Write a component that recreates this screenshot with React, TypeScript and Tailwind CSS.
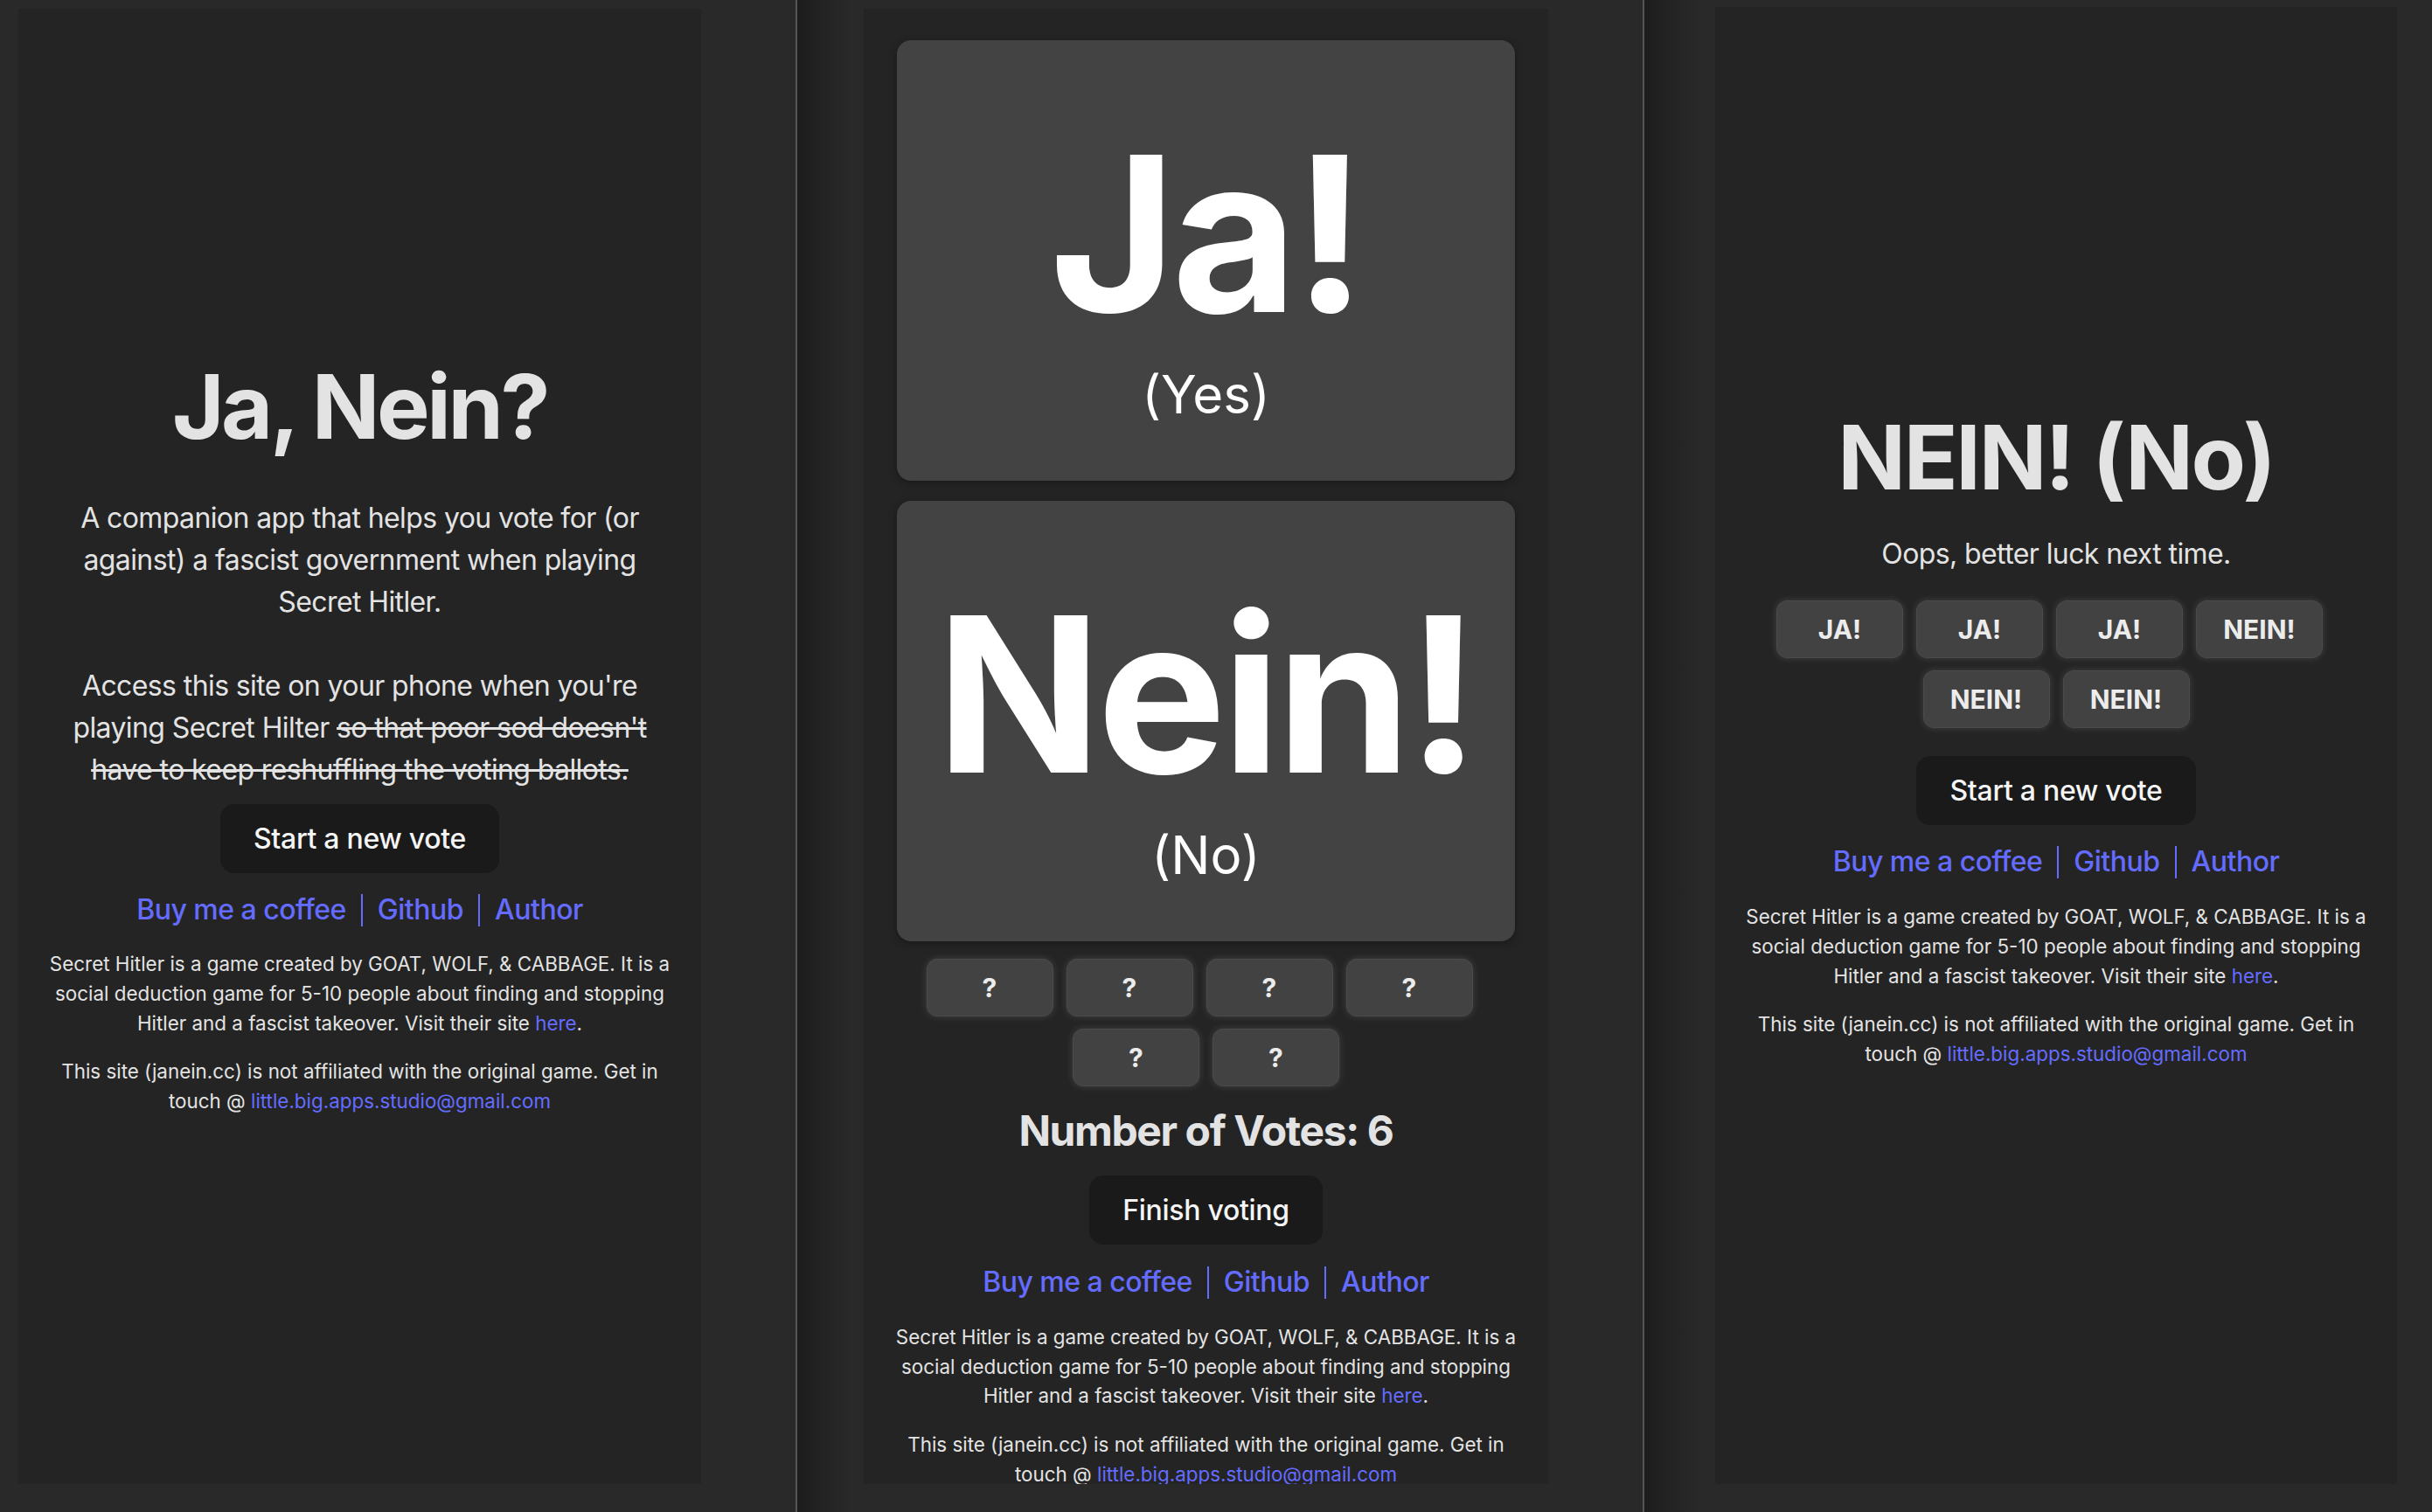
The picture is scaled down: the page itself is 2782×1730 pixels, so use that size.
const LINK = "text-[#646cff]";

function Links() {
  return (
    <div className="flex h-[48px] items-center justify-center text-[32px] font-medium tracking-[-0.5px] text-[#646cff]">
      <a>Buy me a coffee</a>
      <span className="mx-[17px] h-[37px] w-[2px] bg-[#646cff]" />
      <a>Github</a>
      <span className="mx-[17px] h-[37px] w-[2px] bg-[#646cff]" />
      <a>Author</a>
    </div>
  );
}

function Footer() {
  return (
    <div className="whitespace-nowrap text-center text-[22.4px] leading-[33.6px] text-[#e3e3e3]">
      <p>
        Secret Hitler is a game created by GOAT, WOLF, &amp; CABBAGE. It is a
        <br />
        social deduction game for 5-10 people about finding and stopping
        <br />
        Hitler and a fascist takeover. Visit their site{" "}
        <a className={LINK}>here</a>.
      </p>
      <p className="mt-[22.4px]">
        This site (janein.cc) is not affiliated with the original game. Get in
        <br />
        touch @ <a className={LINK}>little.big.apps.studio@gmail.com</a>
      </p>
    </div>
  );
}

function DarkButton({ label }: { label: string }) {
  return (
    <button
      type="button"
      className="h-[79px] rounded-[16px] bg-[#1a1a1a] px-[38px] text-[32px] font-medium tracking-[-0.3px] text-[#f5f5f5]"
    >
      {label}
    </button>
  );
}

function Tile({ label }: { label: string }) {
  return (
    <div className="flex h-[66px] w-[145px] items-center justify-center rounded-[12px] border border-[#4b4b4b] bg-[#424242] text-[30px] font-bold text-[#ececec] shadow-[0_0_8px_rgba(255,255,255,0.14)]">
      {label}
    </div>
  );
}

function Tiles({ labels }: { labels: string[] }) {
  return (
    <div className="flex flex-col items-center gap-[14px]">
      <div className="mr-[15px] flex gap-[15px]">
        {labels.slice(0, 4).map((l, i) => (
          <Tile key={i} label={l} />
        ))}
      </div>
      <div className="flex gap-[15px]">
        {labels.slice(4).map((l, i) => (
          <Tile key={i} label={l} />
        ))}
      </div>
    </div>
  );
}

function BigCard({ word, sub }: { word: string; sub: string }) {
  return (
    <div className="flex h-[504px] w-[707px] shrink-0 flex-col items-center rounded-[16px] bg-[#434343] pt-[97px] text-white shadow-[0_2px_10px_rgba(0,0,0,0.35)]">
      <div className="text-[248px] font-bold leading-[248px] tracking-[-5px]">{word}</div>
      <div className="mt-[30px] text-[60px] leading-[60px]">{sub}</div>
    </div>
  );
}

export default function App() {
  return (
    <div className="flex h-[1730px] w-[2782px] overflow-hidden bg-[#292929] text-[#e3e3e3] [font-family:Inter,'Noto_Sans',sans-serif]">
      {/* home */}
      <section className="flex w-[910px] shrink-0 pb-[32px] pl-[21px] pr-[108px] pt-[10px]">
        <div className="flex flex-1 flex-col items-center justify-center bg-[#242424] text-center">
          <h1 className="text-[102px] font-bold leading-[112px] tracking-[-3.5px]">Ja, Nein?</h1>
          <p className="mt-[48px] whitespace-nowrap text-[32px] leading-[48px] tracking-[-0.6px]">
            A companion app that helps you vote for (or
            <br />
            against) a fascist government when playing
            <br />
            Secret Hitler.
            <br />
            <br />
            Access this site on your phone when you're
            <br />
            playing Secret Hilter <s>so that poor sod doesn't</s>
            <br />
            <s>have to keep reshuffling the voting ballots.</s>
          </p>
          <div className="mt-[15px]">
            <DarkButton label="Start a new vote" />
          </div>
          <div className="mt-[18px]">
            <Links />
          </div>
          <div className="mt-[21px] pb-[22px]">
            <Footer />
          </div>
        </div>
      </section>

      {/* voting */}
      <section className="flex w-[969px] shrink-0 border-l-2 border-[#555555] bg-[linear-gradient(to_right,#1c1c1c,#222222_24px,#292929_62px)] pb-[32px] pl-[76px] pr-[108px] pt-[10px]">
        <div className="flex flex-1 flex-col items-center overflow-hidden bg-[#242424] pt-[36px] text-center">
          <BigCard word="Ja!" sub="(Yes)" />
          <div className="mt-[23px] shrink-0">
            <BigCard word="Nein!" sub="(No)" />
          </div>
          <div className="mt-[20px] shrink-0">
            <Tiles labels={["?", "?", "?", "?", "?", "?"]} />
          </div>
          <h2 className="mt-[22px] shrink-0 text-[48px] font-bold leading-[58px] tracking-[-1.4px]">Number of Votes: 6</h2>
          <div className="mt-[22px] shrink-0">
            <DarkButton label="Finish voting" />
          </div>
          <div className="mt-[19px] shrink-0">
            <Links />
          </div>
          <div className="mt-[22px] shrink-0">
            <Footer />
          </div>
        </div>
      </section>

      {/* result */}
      <section className="flex w-[903px] shrink-0 border-l-2 border-[#555555] bg-[linear-gradient(to_right,#1c1c1c,#222222_24px,#292929_62px)] pb-[32px] pl-[81px] pr-[40px] pt-[8px]">
        <div className="flex flex-1 flex-col items-center justify-center bg-[#242424] pt-[6px] text-center">
          <h1 className="text-[102px] font-bold leading-[112px] tracking-[-2.3px]">NEIN! (No)</h1>
          <p className="mt-[31px] text-[32px] leading-[48px] tracking-[-0.6px]">Oops, better luck next time.</p>
          <div className="mt-[29px]">
            <Tiles labels={["JA!", "JA!", "JA!", "NEIN!", "NEIN!", "NEIN!"]} />
          </div>
          <div className="mt-[32px]">
            <DarkButton label="Start a new vote" />
          </div>
          <div className="mt-[18px]">
            <Links />
          </div>
          <div className="mt-[22px] pb-[22px]">
            <Footer />
          </div>
        </div>
      </section>
    </div>
  );
}
